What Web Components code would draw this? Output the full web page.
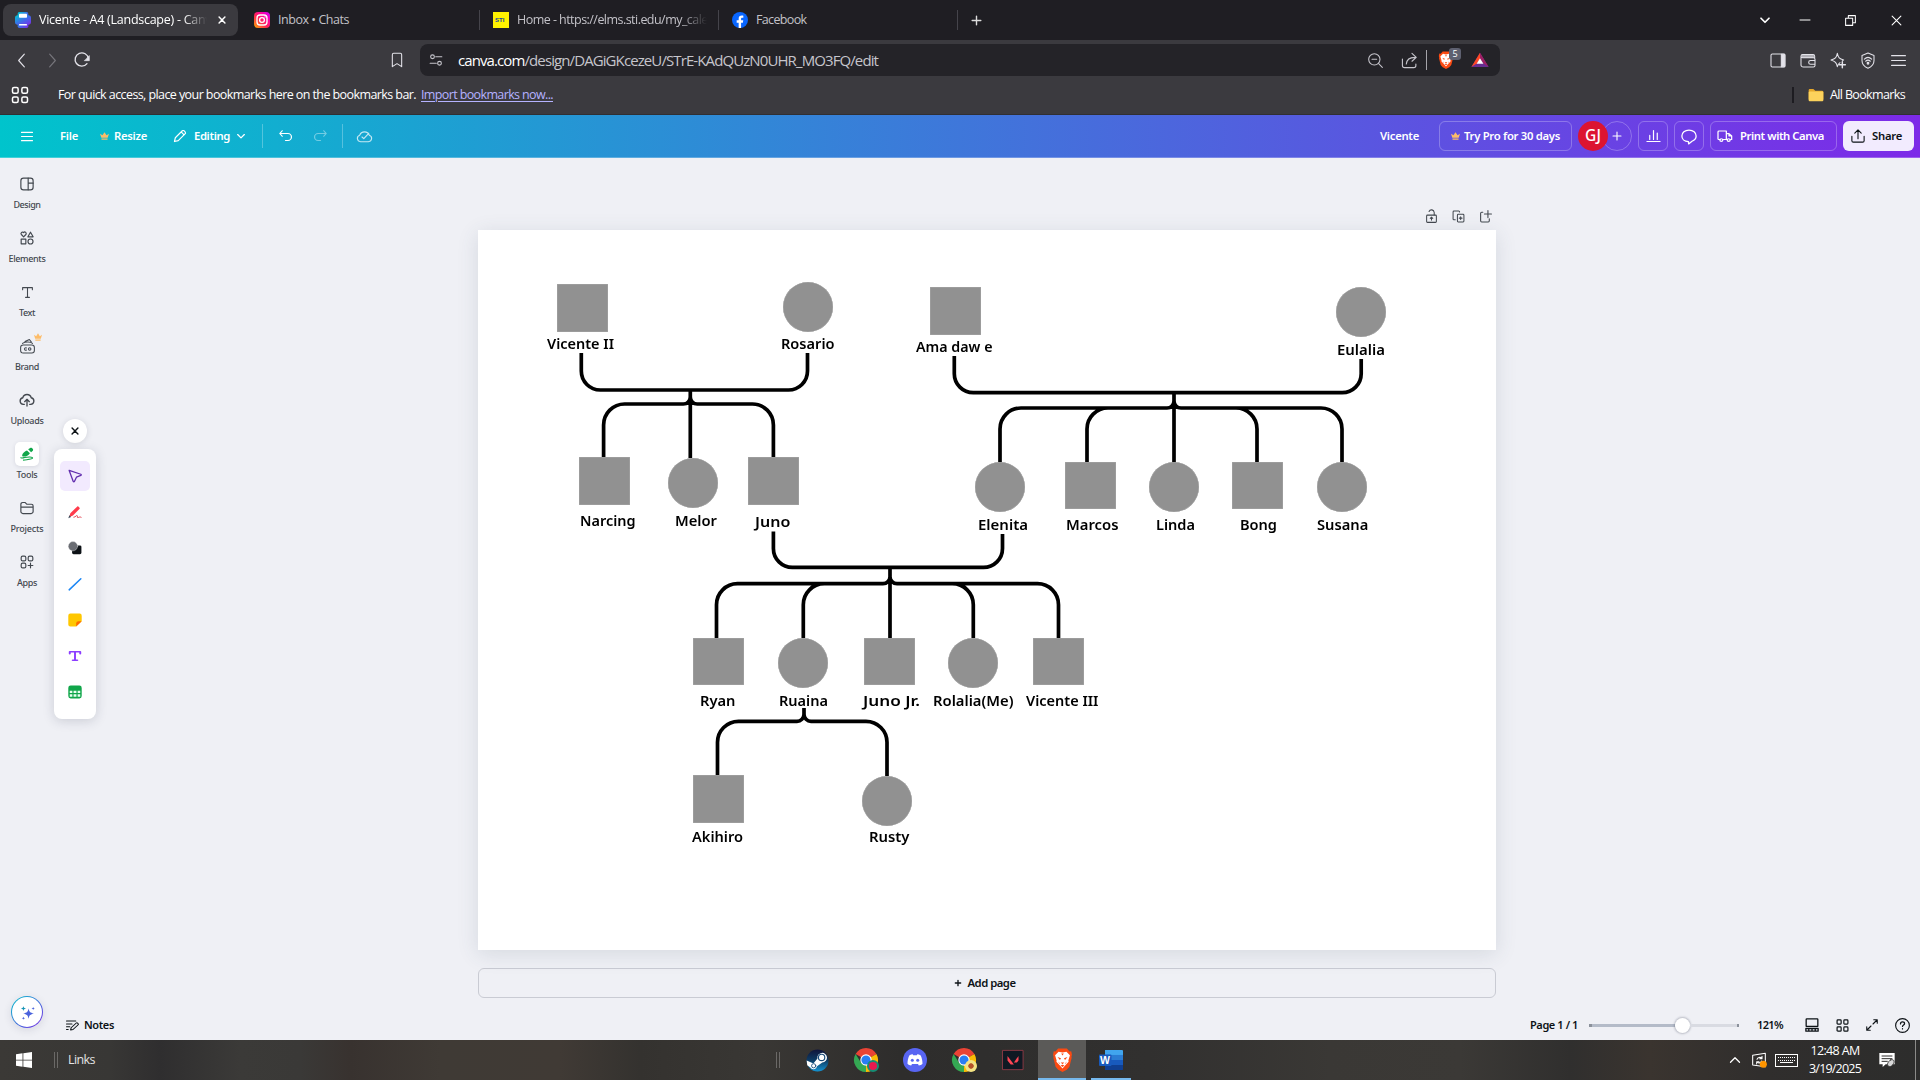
<!DOCTYPE html>
<html lang="en">
<head>
<meta charset="utf-8">
<title>Vicente - A4 (Landscape) - Canva</title>
<style>
html,body{margin:0;padding:0;width:1920px;height:1080px;overflow:hidden;background:#eff0f5}
body{font-family:"Noto Sans",sans-serif}
</style>
</head>
<body>
<desktop-screen></desktop-screen>
<script>
const ICONS = {
  canvaDoc:'<defs><linearGradient id="a" x1="0" y1="0" x2="1" y2="1"><stop offset="0" stop-color="#00c8d0"/><stop offset=".5" stop-color="#3b6fe8"/><stop offset="1" stop-color="#7d2ae8"/></linearGradient></defs><rect x="4" y="0" width="16" height="24" rx="2.5" fill="url(#a)"/><rect x="0" y="5" width="24" height="14" rx="4" fill="url(#a)"/><rect x="6" y="2.5" width="12" height="6" rx="1" fill="#fff"/><rect x="6" y="18" width="12" height="2.4" rx="1" fill="#fff"/>',
  insta:'<defs><linearGradient id="b" x1="0" y1="1" x2="1" y2="0"><stop offset="0" stop-color="#ffb000"/><stop offset=".4" stop-color="#ff2a4d"/><stop offset=".7" stop-color="#ff00a0"/><stop offset="1" stop-color="#c800ff"/></linearGradient></defs><rect width="24" height="24" rx="6" fill="url(#b)"/><rect x="4.5" y="4.5" width="15" height="15" rx="4.5" stroke="#fff" stroke-width="2"/><circle cx="12" cy="12" r="3.6" stroke="#fff" stroke-width="2"/><circle cx="16.6" cy="7.4" r="1" fill="#fff"/>',
  sti:'<rect width="24" height="24" fill="#fff200"/>',
  fb:'<circle cx="12" cy="12" r="12" fill="#0866ff"/><path d="M10 24v-8H7v-3.600h3v-2.200c0-3.400 1.600-5 4.900-5 .7 0 1.600.1 2.100.3v3.200h-1.400c-1.600 0-2 .7-2 1.900v1.800h3.300l-.6 3.600h-2.700v8z" fill="#fff"/>',
  close:'<path d="M5 5l14 14M19 5L5 19"/>',
  plus:'<path d="M12 4v16M4 12h16"/>',
  chev:'<path d="M4 8.5l8 8 8-8"/>',
  chevUp:'<path d="M3 16.5l9-9 9 9"/>',
  min:'<path d="M2 12h20"/>',
  restore:'<path d="M3 8h13v13H3zM8 8V3h13v13h-5"/>',
  back:'<path d="M16 3l-8 9 8 9"/>',
  fwd:'<path d="M8 3l8 9-8 9"/>',
  reload:'<path d="M19.5 17.5A10 10 0 1 1 21.6 10"/><path d="M23 6v7h-7z" fill="currentColor" stroke-width="1"/>',
  bookmark:'<path d="M5 4a2 2 0 0 1 2-2h10a2 2 0 0 1 2 2v18l-7-4.5L5 22z"/>',
  tune:'<circle cx="6" cy="6.5" r="3.2"/><path d="M11.5 6.5H22M2 17.5h10.500"/><circle cx="18" cy="17.500" r="3.2"/>',
  zoomout:'<circle cx="11" cy="11" r="8.500"/><path d="M17.500 17.500L23 23M7.500 11h7"/>',
  shareOut:'<path d="M2 10v9a3 3 0 0 0 3 3h13a3 3 0 0 0 3-3v-2M7.500 17c.5-6 4-9.500 12-9.500M15.500 2l6 5.500-6 5.500"/>',
  brave:'<path d="M7 .5h10l3 3 2-.3.8 3.500-.6 2 .3 1-2.600 9-3 3L12 24l-4.900-2.300-3-3L1.500 9.700l.3-1-.6-2L2 3.200l2 .3z" fill="#fb4a12" stroke="none"/><path d="M7.500 3.800l4.500.8 4.500-.8 4 3.400-1.800 5.300.3 1.300-3.500 3.200L12 20.500 8.500 17 5 13.800l.3-1.300L3.500 7.200z" fill="#fff" stroke="none"/><path d="M6.300 9l4 1.300-1.200 1.700zM17.700 9l-4 1.300 1.200 1.700zM10 14.500h4l-2 1.800zM7.300 13.500l1.700 2-.8.300zM16.700 13.500l-1.700 2 .8.300zM9.800 17.500l2.200-.8 2.200.8-2.200 1.500zM10.500 5.500h3l-1.500 2z" fill="#fb4a12" stroke="none"/>',
  bat:'<path d="M12 1L.5 22.500h23z" fill="#662d91" stroke="none"/><path d="M12 1L.5 22.500 8 17l4-7z" fill="#ff4724" stroke="none"/><path d="M12 1l11.500 21.500L16.500 17 12 10z" fill="#9e1f63" stroke="none"/><path d="M12 9.500L7.500 17.500h9z" fill="#fff" stroke="none"/>',
  sidebar:'<rect x="1.500" y="1.500" width="21" height="21" rx="2"/><path d="M17 2h5v20h-5z" fill="currentColor"/>',
  wallet:'<path d="M22 8V5a2.500 2.500 0 0 0-2.500-2.500H4a2.500 2.500 0 0 0 0 5h16a2.500 2.500 0 0 1 2.500 2.500v10a2.500 2.500 0 0 1-2.500 2.500H5A3.500 3.500 0 0 1 1.500 19V5M22 12h-6a3 3 0 0 0 0 6h6"/><path d="M3 3h17v4H3z" fill="currentColor" opacity=".7"/>',
  leo:'<path d="M15 16c-2 1.300-3.200 3-4 6-1.300-6-3-8-9.500-10C8 10.500 9.700 8.500 11 2c1.300 6.500 3 8.500 9.500 10l-2 .7"/><path d="M18.500 14.500v9M14 19h9" stroke-width="2.200"/>',
  vpn:'<path d="M12 1.500L21 5v7c0 5.500-4 9-9 11-5-2-9-5.500-9-11V5z"/><path d="M6.500 10c3.500-3 7.500-3 11 0M8.500 13c2.200-1.800 4.800-1.800 7 0"/><circle cx="12" cy="16" r="1.300" fill="currentColor"/>',
  menu:'<path d="M1 3h22M1 12h22M1 21h22"/>',
  grid4:'<rect x="2" y="2" width="7.500" height="7.500" rx="2"/><rect x="14.500" y="2" width="7.500" height="7.500" rx="2"/><rect x="2" y="14.500" width="7.500" height="7.500" rx="2"/><rect x="14.500" y="14.500" width="7.500" height="7.500" rx="2"/>',
  folderY:'<path d="M1 3.500C1 2.500 2 1.500 3 1.500h5l3 3h10a2 2 0 0 1 2 2v13H1z" fill="#e6a82b" stroke="none"/><rect x="1" y="6" width="22" height="16.500" rx="1.500" fill="#fcd25c" stroke="none"/>',
  crown:'<path d="M0 5l6.500 5L12 1l5.500 9L24 5l-3.500 12.500h-17zM4 19.500h16V23H4z" fill="#fdbc68" stroke="none"/>',
  pencil:'<path d="M2.500 21.500l1.500-6.500L16 3c2-2 7 3 5 5L9 20zM14 5l5 5"/>',
  undo:'<path d="M6 1.500L1.500 7 6 12.500M2 7h14.500a6.500 7 0 0 1 0 14H12"/>',
  redo:'<path d="M18 1.500L22.500 7 18 12.500M22 7H7.500a6.500 7 0 0 0 0 14H12"/>',
  cloudOk:'<path d="M6.500 20.500a5 5 0 0 1-1.200-9.700 7 7 0 0 1 13.400 0 5 5 0 0 1-1.200 9.700zM8.500 13.500l2.500 2.500 7-8"/>',
  chart:'<path d="M1.500 21.500h21M6 11v7M12 2.500V18M18 7v11"/>',
  bubble:'<path d="M11.500 22.500l-.2-3.300C5.500 19 2.500 15.300 2.500 11.300 2.500 6.500 6.500 3 12 3s9.500 3.500 9.500 8.300c0 3.700-2.500 6.200-5.500 7.400z"/>',
  truck:'<path d="M5 18H3a1.500 1.500 0 0 1-1.500-1.500V5A1.500 1.500 0 0 1 3 3.500h11V18H9M14 8h4l4 4v6h-2M14 18h1.500M18 8v4h4"/><circle cx="6.500" cy="19" r="2.200"/><circle cx="17.500" cy="19" r="2.200"/>',
  upload:'<path d="M12 16.500V2M6.500 7L12 1.500 17.500 7M1.500 12.500V20A2.500 2.500 0 0 0 4 22.500h16a2.500 2.500 0 0 0 2.500-2.500v-7.500"/>',
  lock:'<rect x="3" y="10.500" width="18" height="12.500" rx="1.500"/><path d="M17 10V6a5 5 0 0 0-9.500-1.700M12 14.500v4.500M9.700 16l2.300-2 2.300 2"/>',
  dup:'<path d="M6 18H3.500A1.500 1.500 0 0 1 2 16.500v-13A1.500 1.500 0 0 1 3.500 2h9A1.500 1.500 0 0 1 14 3.500M22 20.500a1.500 1.500 0 0 1-1.500 1.500h-9A1.500 1.500 0 0 1 10 20.500v-11A1.500 1.500 0 0 1 11.500 8h9A1.500 1.500 0 0 1 22 9.500zM16 12.500v5M13.500 15h5"/>',
  addPage:'<path d="M7 4H5a2 2 0 0 0-2 2v14a2 2 0 0 0 2 2h12a2 2 0 0 0 2-2v-4M16.500 1v13M10 7.500h13"/>',
  design:'<rect x="1.500" y="2" width="21" height="20" rx="4.500"/><path d="M14 2v20M14 10.500h8.500"/>',
  elements:'<path d="M6.200 10L2.400 6a2.500 2.500 0 0 1 3.800-3.300A2.500 2.500 0 0 1 10 6zM18 2l4.500 8h-9zM2 14h8v8H2z"/><circle cx="18" cy="18" r="4.300"/>',
  text:'<path d="M3 7V3h18v4M12 3v18M8.500 21h7"/>',
  brand:'<rect x="1" y="9.500" width="22" height="13" rx="4"/><path d="M4 7C9 4 17 4.500 20 7M8 4l7-3.200 3 3.700M10.300 14.300a2 2 0 1 0 0 3.400"/><circle cx="15.500" cy="16" r="2"/>',
  uploads:'<path d="M8 18.500H6.500a5 5 0 0 1-.8-9.900 6.500 6.500 0 0 1 12.600 0 5 5 0 0 1-.8 9.900H16M12 21v-9M8.500 14.500L12 11l3.500 3.500"/>',
  tools:'<path d="M4 16c-1-3 2-8 8-10l5 4.500C14 15.500 9 17 4 16zM14 4l3.500-2.500C20 0 24 4 22 6.500L19 9z" fill="#10a64a" stroke="none"/><path d="M8 18c6-1 13.500-1.500 13.500 1S12 21.500 6 22.500M1.500 18.500c2 .8 4 .3 5.500-.3" stroke="#10a64a"/>',
  projects:'<path d="M1.500 7V5.500A3 3 0 0 1 4.500 2.500h4l3 3h8a3 3 0 0 1 3 3V18a3.500 3.500 0 0 1-3.500 3.500H5A3.500 3.500 0 0 1 1.500 18zM1.500 10.500h21"/>',
  apps:'<rect x="2" y="2" width="8" height="8" rx="2.500"/><rect x="14" y="2" width="8" height="8" rx="2.500"/><rect x="2" y="14" width="8" height="8" rx="2.500"/><path d="M18 14v8M14 18h8"/>',
  cursor:'<path d="M2 2.500l20 6.500c1 .5 1 1.500 0 2l-7.500 3L11 21.500c-.5 1-1.500 1-2 0z"/>',
  pen:'<path d="M2 21l2-7L16 2.500c1-1 5 2.500 4 4L8.500 18z" fill="#ff3b4b" stroke="none"/><path d="M.5 22.500l1.800-5 3 3z" fill="#3a4a5a" stroke="none"/><path d="M10 21c3 0 5-4.500 6-2.500s-1 3 1 3 3-2 5.500-.5" stroke="#e0303f" stroke-width="1.500"/>',
  shapes:'<rect x="7" y="7.500" width="16" height="15" rx="2.500" fill="#0d1216" stroke="none"/><circle cx="8.500" cy="9" r="8" fill="#6a6d73" stroke="#fff" stroke-width=".5"/>',
  line:'<path d="M2 22L22 3" stroke="#1b86f5" stroke-width="2.600"/>',
  note:'<path d="M4 1h16a3.500 3.500 0 0 1 3.500 3.500V14L14 23H4A3.500 3.500 0 0 1 .5 19.500v-15A3.500 3.500 0 0 1 4 1z" fill="#ffc700" stroke="none"/><path d="M23.500 14L14 23v-5a4 4 0 0 1 4-4z" fill="#ff6a00" stroke="none"/>',
  bigT:'<path d="M3 7.500V3.500h18v4M12 3.500v17M8 20.500h8" stroke="#8b3dff" stroke-width="3.300"/>',
  table:'<rect x=".5" y="1" width="23" height="22" rx="4" fill="#10a64a" stroke="none"/><path d="M3 10h4.500v3.500H3zM9.500 10h5v3.500h-5zM16.500 10H21v3.500h-4.500zM3 16h4.500v4H3zM9.500 16h5v4h-5zM16.500 16H21v4h-4.500z" fill="#e8fff0" stroke="none"/>',
  sparkles:'<g stroke="none" fill="#4a63dd"><path d="M14 4.500c1.300 6 2.500 7.500 10 9.500-7.500 2-8.700 3.500-10 9.500-1.300-6-2.500-7.500-10-9.500 7.500-2 8.700-3.500 10-9.500z"/><path d="M4.500 0c.6 3.200 1.200 3.800 4.800 4.800C5.700 5.800 5.100 6.400 4.500 9.600 3.900 6.400 3.300 5.800-.3 4.800 3.300 3.800 3.900 3.200 4.500 0z" fill="#1593b5"/><path d="M22.500 1.200c.4 2.300.9 2.800 3.200 3.300-2.300.5-2.800 1-3.200 3.300-.4-2.300-.9-2.800-3.200-3.300 2.300-.5 2.800-1 3.200-3.300zM4.500 19.200c.4 2.300.9 2.800 3.200 3.300-2.300.5-2.800 1-3.200 3.300-.4-2.300-.9-2.800-3.200-3.300 2.300-.5 2.800-1 3.200-3.300z"/></g>',
  notes:'<path d="M1 4h17M1 10h10M1 15.500h6M1 21h3M8.500 22l1-4.500L19 8c1.500-1.500 5 2 3.500 3.500L13 21z"/>',
  pageView:'<rect x="2" y="1.500" width="20" height="13" rx="1"/><path d="M1.500 18h21v4.500h-21zM6.500 18v4.500M12 18v4.500M17.500 18v4.500"/>',
  gridView:'<rect x="2" y="1.500" width="7.500" height="8" rx="1.500"/><rect x="14.500" y="1.500" width="7.500" height="8" rx="1.500"/><rect x="2" y="14.500" width="7.500" height="8" rx="1.500"/><rect x="14.500" y="14.500" width="7.500" height="8" rx="1.500"/>',
  expand:'<path d="M14 10l8-8M15.500 1.500h7v7M10 14l-8 8M1.500 15.500v7h7"/>',
  help:'<circle cx="12" cy="12" r="11"/><path d="M8.800 9.500c0-4.500 6.500-4 6.500-.5 0 2-3.300 2.300-3.300 4.500M12 17v.5" stroke-width="2"/>',
  win:'<path d="M0 3.400L9.800 2v9.500H0zM11 1.800L24 0v11.500H11zM0 12.600h9.800V22L0 20.600zM11 12.600h13V24l-13-1.800z" fill="#fff" stroke="none"/>',
  steam:'<defs><linearGradient id="st" x1="0" y1="0" x2="0" y2="1"><stop offset="0" stop-color="#10143a"/><stop offset=".5" stop-color="#0d3d66"/><stop offset="1" stop-color="#1493d1"/></linearGradient></defs><circle cx="12" cy="12" r="11.500" fill="url(#st)" stroke="none"/><path d="M.7 12l7 3 4.300-5a5 5 0 1 1 5 4l-5.500 4a3.800 3.800 0 0 1-7 1.300L1.300 17z" fill="#fff" stroke="none"/><circle cx="16.300" cy="8.800" r="3.300" fill="#fff" stroke="#174a78" stroke-width="1.200"/><circle cx="8" cy="17.500" r="2.200" stroke="#174a78" stroke-width=".9"/>',
  chrome:'<path d="M12 12L1.600 6A12 12 0 0 1 22.400 6z" fill="#ea4335" stroke="none"/><path d="M12 12H12L22.400 6A12 12 0 0 1 12 24z" fill="#fbbc05" stroke="none"/><path d="M12 24A12 12 0 0 1 1.600 6l5.600 9 4.800 3z" fill="#34a853" stroke="none"/><path d="M12 12L16.800 15 12 24z" fill="#fbbc05" stroke="none"/><path d="M12 6.300h10.600L22.400 6H12z" fill="#ea4335" stroke="none"/><circle cx="12" cy="12" r="5.700" fill="#fff" stroke="none"/><circle cx="12" cy="12" r="4.600" fill="#2a7df4" stroke="none"/>',
  discord:'<circle cx="12" cy="12" r="12" fill="#5865f2" stroke="none"/><path d="M4.500 15.700c0-3 .7-6.200 2-8.400 1.200-.7 2-1 3.200-1.100l.5 1h3.600l.5-1c1.200.1 2 .4 3.200 1.100 1.300 2.200 2 5.400 2 8.400-1 1-2.200 1.500-3.700 1.800l-.8-1.500h-6l-.8 1.500c-1.500-.3-2.700-.8-3.700-1.800z" fill="#fff" stroke="none"/><circle cx="9.300" cy="12.300" r="1.500" fill="#5865f2" stroke="none"/><circle cx="14.700" cy="12.300" r="1.500" fill="#5865f2" stroke="none"/>',
  valorant:'<rect x="1" y="1.500" width="22" height="21" fill="#0f1923" stroke="#8f3a45" stroke-width="1"/><path d="M6 7.500l7 9.500H9.500L6 12.500zM18 7.500V12.500L16.300 14.700h-3.300z" fill="#ff4655" stroke="none"/>',
  word:'<path d="M6 1h17a1 1 0 0 1 1 1v5H6z" fill="#41a5ee" stroke="none"/><path d="M6 6.500h18V12H6z" fill="#2b7cd3" stroke="none"/><path d="M6 12h18v5.500H6z" fill="#185abd" stroke="none"/><path d="M6 17.500h18V22a1 1 0 0 1-1 1H6z" fill="#103f91" stroke="none"/><rect x="0" y="6" width="12.500" height="12.500" rx="1" fill="#185abd" stroke="none"/>',
  wupdate:'<path d="M2.500 5l19-3v20l-19-2.500z"/><path d="M9 11c1-3 5-4 7-1.500M16.500 6.500v3.500H13M16 13.500c-1 3-5 4-7 1.500M8.500 18v-3.500H12"/><circle cx="18.500" cy="18.500" r="5.300" fill="#ff9500" stroke="none"/>',
  action:'<path d="M.5 1.500h23v17H10l-4.500 4v-4h-5z" fill="#fff" stroke="none"/><path d="M4.500 6h15M4.500 10h15M4.500 14h8" stroke="#302f2e" stroke-width="1.500"/><path d="M17 12c4-2 7 1 5 5s-5 6-8 4 0-7 3-9z" fill="#d8d8d8" stroke="#302f2e" stroke-width="1.300"/>'
};
const def=(n,c)=>customElements.define(n,c);
/* Base class: renders a template string into an open shadow root. */
class Base extends HTMLElement{
  connectedCallback(){
    if(this.shadowRoot) return;
    const r=this.attachShadow({mode:'open'});
    r.innerHTML='<style>*{box-sizing:border-box}'+this.css()+'</style>'+this.html();
    this.ready&&this.ready(r);
  }
  a(n,d=''){return this.getAttribute(n)??d}
  css(){return ''} html(){return ''}
}
def('ui-icon',class extends Base{
  css(){const s=this.a('size','16');return `:host{display:block;flex:none;width:${s}px;height:${this.a('h',s)}px}svg{display:block;width:100%;height:100%;overflow:visible}`}
  html(){return `<svg viewBox="0 0 24 24" preserveAspectRatio="none" fill="none" stroke="${/^(insta|fb|sti|canvaDoc)$/.test(this.a('name'))?'none':'currentColor'}" stroke-width="${this.a('sw','1.6')}" stroke-linecap="round" stroke-linejoin="round">${ICONS[this.a('name')]}</svg>`}
});
/* Single-line text sized to span the given width: by tracking, or by scaling when "scale" is set. */
def('fit-text',class extends Base{
  css(){return `:host{display:block;flex:none;white-space:nowrap;width:${this.a('w')}px}span{display:inline-block;white-space:pre;transform-origin:0 50%}:host([underline]) span{text-decoration:underline;text-underline-offset:2px}`}
  html(){return '<span><slot></slot></span>'}
  ready(r){const s=r.querySelector('span'),n=this.textContent.length,w=+this.a('w'),c=s.getBoundingClientRect().width;
    if(this.hasAttribute('scale')) s.style.transform=`scaleX(${(w/c).toFixed(4)})`;
    else s.style.letterSpacing=((w-c)/n).toFixed(3)+'px'}
});
def('browser-tab',class extends Base{
  css(){const on=this.hasAttribute('active');return `:host{display:flex;align-items:center;width:239px;height:32px;flex:none;font:12.5px "Open Sans",sans-serif;color:${on?'#fff':'#c3c2c8'}}
  .t{display:flex;align-items:center;width:235px;height:32px;padding-left:12px;border-radius:8px;background:${on?'#3b3a3f':'none'}}
  .c{width:${on?168:190}px;margin-left:8px;overflow:hidden;line-height:20px;-webkit-mask:linear-gradient(90deg,#000 86%,transparent)}
  .full{-webkit-mask:none}
  .s{width:1px;height:20px;margin-left:2px;background:${on?'transparent':'#45444b'}}
  .x{margin-left:${on?10:0}px}.i{position:relative}.b{position:absolute;left:2px;top:5px;font:bold 6px/7px "Liberation Sans";color:#15479b}`}
  html(){return `<div class="t"><div class="i"><ui-icon name="${this.a('icon')}" size="16"></ui-icon>${this.a('icon')=='sti'?'<span class="b">STI</span>':''}</div><div class="c ${this.hasAttribute('short')?'full':''}"><slot></slot></div>${this.hasAttribute('active')?'<ui-icon class="x" name="close" size="10" sw="3.6"></ui-icon>':''}</div><div class="s"></div>`}
});
def('tab-strip',class extends Base{
  css(){return `:host{display:flex;align-items:center;height:40px;background:#1f1e23;color:#fff;padding-left:3px}.g{flex:1}ui-icon{color:#fff}`}
  html(){return `<browser-tab icon="canvaDoc" active><fit-text w="179">Vicente - A4 (Landscape) - Canva</fit-text></browser-tab>
  <browser-tab icon="insta" short><fit-text w="71">Inbox • Chats</fit-text></browser-tab>
  <browser-tab icon="sti"><fit-text w="216">Home - https://elms.sti.edu/my_calendar</fit-text></browser-tab>
  <browser-tab icon="fb" short><fit-text w="50.5">Facebook</fit-text></browser-tab>
  <ui-icon name="plus" size="13" sw="2.6" style="margin-left:11px;color:#ddd"></ui-icon><div class="g"></div>
  <ui-icon name="chev" size="12" h="12" sw="3.4"></ui-icon>
  <ui-icon name="min" size="12" sw="2" style="margin-left:28px"></ui-icon>
  <ui-icon name="restore" size="13" sw="1.9" style="margin-left:33px"></ui-icon>
  <ui-icon name="close" size="15" sw="1.7" style="margin:0 16px 0 32px"></ui-icon>`}
});
def('nav-bar',class extends Base{
  css(){return `:host{display:flex;align-items:center;height:40px;background:#3b3a3f;color:#e4e3ea;padding-left:13px;font:15px "Open Sans",sans-serif}
  .u{display:flex;align-items:center;height:32px;width:1080px;margin-left:15px;border-radius:8px;background:#242328;color:#c6c5cc;padding-left:9px}
  fit-text{line-height:30px;margin-top:-1px}b{font-weight:400;color:#fff}.g{flex:1}.v{width:1px;height:20px;background:#a5a4aa;margin-left:8px}
  .br{position:relative;margin-left:11px}.bd{position:absolute;left:11px;top:-3px;width:12px;height:12px;border-radius:3px;background:#5e6070;color:#fff;font:9px/12px "Open Sans";text-align:center}`}
  html(){return `<ui-icon name="back" size="17"></ui-icon><ui-icon name="fwd" size="17" style="margin-left:14px;color:#77767c"></ui-icon><ui-icon name="reload" size="16" sw="2" style="margin-left:13px"></ui-icon>
  <ui-icon name="bookmark" size="16" style="margin-left:299px"></ui-icon>
  <div class="u"><ui-icon name="tune" size="14" sw="1.900"></ui-icon><fit-text w="420" style="margin-left:15px"><b>canva.com</b>/design/DAGiGKcezeU/STrE-KAdQUzN0UHR_MO3FQ/edit</fit-text>
   <ui-icon name="zoomout" size="16" style="margin-left:489px"></ui-icon><ui-icon name="shareOut" size="17" style="margin-left:18px"></ui-icon><div class="v"></div>
   <div class="br"><ui-icon name="brave" size="16" h="18"></ui-icon><div class="bd">5</div></div><ui-icon name="bat" size="18" h="16" style="margin-left:17px"></ui-icon></div>
  <div class="g"></div>
  <ui-icon name="sidebar" size="16" h="15"></ui-icon><ui-icon name="wallet" size="16" h="15" style="margin-left:14px"></ui-icon><ui-icon name="leo" size="16" style="margin-left:14px"></ui-icon><ui-icon name="vpn" size="16" h="17" style="margin-left:14px"></ui-icon><ui-icon name="menu" size="15" h="13" sw="2" style="margin:0 14px 0 15px"></ui-icon>`}
});
def('bookmark-bar',class extends Base{
  css(){return `:host{display:flex;align-items:center;height:35px;background:#3b3a3f;border-bottom:1px solid #302f33;color:#fff;padding:0 15px 5px 11px;font:12.500px "Open Sans",sans-serif}
  a{color:#b5b2ff}.g{flex:1}.v{width:2px;height:16px;background:#1d1c21}`}
  html(){return `<ui-icon name="grid4" size="18" sw="2"></ui-icon><fit-text w="358" style="margin-left:29px">For quick access, place your bookmarks here on the bookmarks bar.</fit-text>
  <a style="margin-left:5px"><fit-text w="132" underline>Import bookmarks now...</fit-text></a><div class="g"></div><div class="v"></div><ui-icon name="folderY" size="16" h="14" style="margin-left:14px"></ui-icon><fit-text w="75" style="margin-left:6px">All Bookmarks</fit-text>`}
});
def('outline-button',class extends Base{
  css(){return `:host{display:flex;align-items:center;flex:none;height:30px;border:1px solid rgba(255,255,255,.26);border-radius:6px}:host([center]){justify-content:center}`}
  html(){return '<slot></slot>'}
});
def('editor-header',class extends Base{
  css(){return `:host{display:flex;align-items:center;height:43px;padding-left:21px;border-bottom:1px solid rgba(255,255,255,.25);background:linear-gradient(90deg,#00c4cc,#7d2ae8) border-box;color:#fff;font:650 11.300px/20px "Noto Sans",sans-serif}
  .v{width:1px;height:24px;background:rgba(255,255,255,.28)}.g{flex:1}
  .gj{width:30px;height:30px;border-radius:50%;background:#dc1431;text-align:center;font:500 15.500px/29px "Noto Sans";z-index:1;margin-left:6px}
  .sh{display:flex;align-items:center;width:71px;height:30px;border-radius:6px;background:#f2ebfe;color:#0d1216;padding-left:8px;margin:0 6px 0 6px}`}
  html(){return `<ui-icon name="menu" size="12" h="11" sw="2.200"></ui-icon><fit-text w="18" style="margin-left:27px">File</fit-text>
  <ui-icon name="crown" size="9" h="8" style="margin-left:22px"></ui-icon><fit-text w="33" style="margin-left:5px">Resize</fit-text>
  <ui-icon name="pencil" size="14" sw="2" style="margin-left:26px"></ui-icon><fit-text w="36" style="margin-left:7px">Editing</fit-text><ui-icon name="chev" size="10" sw="3" style="margin-left:6px"></ui-icon>
  <div class="v" style="margin-left:16px"></div><ui-icon name="undo" size="13" h="12" sw="2.300" style="margin-left:16px"></ui-icon><ui-icon name="redo" size="13" h="12" sw="2.300" style="margin-left:22px;opacity:.4"></ui-icon>
  <div class="v" style="margin-left:15px"></div><ui-icon name="cloudOk" size="17" h="16" style="margin-left:13px;opacity:.75"></ui-icon><div class="g"></div>
  <fit-text w="39">Vicente</fit-text>
  <outline-button style="width:133px;margin-left:20px;padding-left:11px"><ui-icon name="crown" size="9" h="8"></ui-icon><fit-text w="96" style="margin-left:4px">Try Pro for 30 days</fit-text></outline-button>
  <div class="gj">GJ</div><outline-button center style="width:30px;border-radius:50%;margin-left:-6px"><ui-icon name="plus" size="12" sw="2.200"></ui-icon></outline-button>
  <outline-button center style="width:30px;margin-left:6px"><ui-icon name="chart" size="15" h="14" sw="1.900"></ui-icon></outline-button>
  <outline-button center style="width:30px;margin-left:6px"><ui-icon name="bubble" size="18" h="17" sw="1.700"></ui-icon></outline-button>
  <outline-button style="width:127px;margin-left:6px;padding-left:6px"><ui-icon name="truck" size="16" h="14" sw="1.900"></ui-icon><fit-text w="84" style="margin-left:7px">Print with Canva</fit-text></outline-button>
  <div class="sh"><ui-icon name="upload" size="14" sw="1.900"></ui-icon><fit-text w="30" style="margin-left:7px">Share</fit-text></div>`}
});
def('side-item',class extends Base{
  css(){return `:host{display:flex;flex-direction:column;align-items:center;width:54px;height:54px;flex:none;color:#43484f;font:500 9px/12px "Noto Sans",sans-serif}
  .i{position:relative;display:flex;align-items:center;justify-content:center;width:24px;height:24px;border-radius:5px}
  :host([on]) .i{background:#fff;box-shadow:0 1px 4px rgba(40,45,70,.12)}
  .cr{position:absolute;right:-3px;top:-1px}fit-text{margin-top:3px}`}
  html(){return `<div class="i"><ui-icon name="${this.a('icon')}" size="${this.a('size','14')}" sw="${this.a('sw','2')}"></ui-icon>${this.hasAttribute('pro')?'<ui-icon class="cr" name="crown" size="8"></ui-icon>':''}</div><fit-text w="${this.a('w')}"><slot></slot></fit-text>`}
  ready(r){const s=r.querySelector('fit-text').shadowRoot.querySelector('span');s.style.letterSpacing='0';s.style.letterSpacing=((+this.a('w')-s.getBoundingClientRect().width)/this.textContent.length)+'px'}
});
def('side-rail',class extends Base{
  css(){return `:host{display:flex;flex-direction:column;width:54px;height:882px;padding-top:14px}
  .ai{width:32px;height:32px;border-radius:50%;margin:auto 0 12px 11px;border:1.500px solid transparent;background:linear-gradient(#fff,#fff) padding-box,linear-gradient(135deg,#00c4cc,#7d2ae8) border-box;display:flex;align-items:center;justify-content:center;box-shadow:0 2px 8px rgba(40,45,70,.12)}`}
  html(){return `<side-item icon="design" w="27">Design</side-item><side-item icon="elements" w="37">Elements</side-item><side-item icon="text" size="13" w="16">Text</side-item><side-item icon="brand" size="15" sw="1.700" w="24" pro>Brand</side-item><side-item icon="uploads" size="16" w="33">Uploads</side-item><side-item icon="tools" w="21" on>Tools</side-item><side-item icon="projects" w="33">Projects</side-item><side-item icon="apps" w="20">Apps</side-item>
  <div class="ai"><ui-icon name="sparkles" size="13"></ui-icon></div>`}
});
def('tool-palette',class extends Base{
  css(){return `:host{display:flex;flex-direction:column;align-items:center;width:42px;padding-top:261px}
  .x{width:24px;height:24px;border-radius:50%;background:#fff;display:flex;align-items:center;justify-content:center;color:#0d1216;box-shadow:0 1px 6px rgba(40,45,70,.15)}
  .p{margin-top:6px;width:42px;height:270px;border-radius:8px;background:#fff;padding-top:12px;display:flex;flex-direction:column;align-items:center;gap:6px;box-shadow:0 2px 12px rgba(40,45,70,.18)}
  .b{width:30px;height:30px;border-radius:5px;display:flex;align-items:center;justify-content:center;color:#612dae}
  .b:first-child{background:#f2eafe}`}
  html(){return `<div class="x"><ui-icon name="close" size="10" sw="3.500"></ui-icon></div><div class="p">${['cursor','pen','shapes','line','note','bigT','table'].map(n=>`<div class="b"><ui-icon name="${n}" size="14" h="${n=='bigT'?12:14}" sw="2.200"></ui-icon></div>`).join('')}</div>`}
});
/* One relative on the chart: a square or a circle, with the name under it. */
def('person-node',class extends Base{
  css(){const c=this.hasAttribute('circle'),x=+this.a('cx'),y=+this.a('top'),h=c?50:47.300,w=c?50:51;
   return `:host{position:absolute;left:${x-w/2}px;top:${y}px;width:${w}px;height:${h}px}
   .s{width:100%;height:100%;background:#919191;border-radius:${c?'50%':'0'};box-shadow:0 0 0 .5px #a8a8a8 inset}
   .l{position:absolute;left:${+this.a('lx')-x+w/2}px;top:${+this.a('base')-y-15.300}px;font:600 14.200px/20px "Noto Sans",sans-serif;color:#000}`}
  html(){return `<div class="s"></div><fit-text class="l" scale w="${this.a('lw')}">${this.a('name')}</fit-text>`}
});
def('family-chart',class extends Base{
  css(){return `:host{display:block;position:relative;width:1018px;height:720px;background:#fff;box-shadow:0 4px 20px rgba(57,76,96,.14)}svg{position:absolute;left:0;top:0}`}
  html(){
    const P=[['Vicente II',0,582.300,284.300,547,67,349],['Rosario',1,807.600,281.500,780.700,53.500,349],['Ama daw e',0,955.300,287.300,915.800,76.500,352.300],['Eulalia',1,1361,287.300,1337.300,48,355.300],
    ['Narcing',0,604.100,457.300,580.300,55.500,526],['Melor',1,692.500,458,674.800,42,526],['Juno',0,773.200,457.300,755.500,35.300,527],
    ['Elenita',1,1000,462,977.500,50,530],['Marcos',0,1090.500,462.200,1065.500,52.500,530],['Linda',1,1174,462,1156,39,530],['Bong',0,1257.800,462.200,1239.700,37,530],['Susana',1,1342,462,1316.800,51.300,530],
    ['Ryan',0,718,638,700.300,35.500,706],['Ruaina',1,803.300,638,779,49,706],['Juno Jr.',0,889,638,863.300,57,706],['Rolalia(Me)',1,973,638,932.700,80.500,706],['Vicente III',0,1058.500,638,1025.500,72.500,706],
    ['Akihiro',0,718,775.300,692,51,842],['Rusty',1,887,775.500,868.800,40.500,842]];
    const X=478,Y=230;
    const join=(l,yl,r,yr,b)=>`M${l} ${yl}V${b-19}A19 19 0 0 0 ${l+19} ${b}H${r-19}A19 19 0 0 0 ${r} ${b-19}V${yr}`;
    const kid=(jx,jy,y,x,e)=>{const s=x<jx?-1:1,f=s<0?1:0,g=s<0?0:1;return `M${jx} ${jy}V${y-7}A7 7 0 0 ${f} ${jx+7*s} ${y}H${x-21*s}A21 21 0 0 ${g} ${x} ${y+21}V${e}`};
    const d=[join(581.300,353,807.500,353,390),join(954.300,356,1361.200,359,392.700),join(773.400,531.500,1002.500,534,567.400),
      'M690.300 390V458','M1174 392V463','M890 567V638',
      ...[603.600,773.400].map(x=>kid(690.300,390,404,x,458)),
      ...[1000,1087,1257,1342].map(x=>kid(1174,392,408,x,462.500)),
      ...[716.500,803.300,973.300,1058.500].map(x=>kid(890,567,583.700,x,638)),
      ...[717.500,887].map(x=>kid(804,708,721.300,x,776))].join('');
    return `<svg width="1018" height="720" viewBox="${X} ${Y} 1018 720" fill="none" stroke="#000" stroke-width="3.700"><path d="${d}"/></svg>`+
      P.map(p=>`<person-node name="${p[0]}" ${p[1]?'circle':''} cx="${p[2]-X}" top="${p[3]-Y}" lx="${p[4]-X}" lw="${p[5]}" base="${p[6]-Y}"></person-node>`).join('')}
});
def('zoom-slider',class extends Base{
  css(){return `:host{display:flex;align-items:center;width:150px;height:16px;flex:none}.a{width:86px;height:3px;background:#b4bbc8;border-left:3px solid #8b919b}.k{width:15px;height:15px;border-radius:50%;background:#fff;box-shadow:0 0 2px 1px rgba(60,65,85,.3);flex:none}.b{flex:1;height:3px;background:#d9dbe2;border-right:2px solid #8b919b}`}
  html(){return '<div class="a"></div><div class="k"></div><div class="b"></div>'}
});
def('canvas-area',class extends Base{
  css(){return `:host{display:flex;flex-direction:column;flex:1;height:882px;margin-left:-96px;color:#43484f}
  .t{display:flex;justify-content:flex-end;align-items:center;gap:14px;height:14px;margin:51px 428px 7px 0}
  family-chart{margin-left:478px}
  .add{display:flex;align-items:center;justify-content:center;margin:18px 0 0 478px;padding-right:5px;width:1018px;height:30px;border:1px solid #c9cbd3;border-radius:6px;font:650 11.300px/20px "Noto Sans";color:#0d1216}
  .f{display:flex;align-items:center;height:30px;margin-top:12px;padding-left:66px;color:#0d1216;font:600 11px/20px "Noto Sans"}.g{flex:1}`}
  html(){return `<div class="t"><ui-icon name="lock" size="13" h="14" sw="1.900"></ui-icon><ui-icon name="dup" size="13" sw="1.900"></ui-icon><ui-icon name="addPage" size="13" sw="2"></ui-icon></div>
  <family-chart></family-chart><div class="add"><ui-icon name="plus" size="8" sw="4"></ui-icon><fit-text w="48" style="margin-left:6px">Add page</fit-text></div>
  <div class="f"><ui-icon name="notes" size="13" h="12" sw="2.100"></ui-icon><fit-text w="30" style="margin-left:5px;">Notes</fit-text><div class="g"></div><fit-text w="48">Page 1 / 1</fit-text><zoom-slider style="margin-left:11px"></zoom-slider><fit-text w="26" style="margin-left:18px">121%</fit-text>
  <ui-icon name="pageView" size="14" sw="2.200" style="margin-left:22px"></ui-icon><ui-icon name="gridView" size="13" h="13" sw="2.200" style="margin-left:17px"></ui-icon><ui-icon name="expand" size="12" sw="2.200" style="margin-left:17px"></ui-icon><ui-icon name="help" size="15" sw="1.800" style="margin:0 10px 0 17px"></ui-icon></div>`}
});
def('task-icon',class extends Base{
  css(){return `:host{position:relative;display:flex;align-items:center;justify-content:center;width:48px;height:40px;flex:none;margin-left:1px;border-bottom:2px solid transparent;padding-top:2px}
  :host([open]){border-color:#76b9ed;width:40px;margin-left:5px}:host([on]){background:#5b5a58;border-color:#76b9ed}
  .d{position:absolute;left:25px;top:20px;width:12px;height:12px;border-radius:50%}
  .r{background:#e8194f;border:2px solid #168c74}.y{background:radial-gradient(#b5532a 0 28%,#f4e383 36%)}
  .w{position:absolute;left:9px;top:13px;color:#fff;font:bold 10.500px/14px "Liberation Sans"}`}
  html(){const b=this.a('badge');return `<ui-icon name="${this.a('icon')}" size="${this.a('size','24')}" h="${this.a('h',this.a('size','24'))}"></ui-icon>${b?`<div class="d ${b}"></div>`:''}${this.a('icon')=='word'?'<span class="w">W</span>':''}`}
});
def('task-bar',class extends Base{
  css(){return `:host{display:flex;align-items:center;height:40px;color:#fff;font:12.500px/18px "Open Sans",sans-serif;background:linear-gradient(90deg,#3b3936 0,#383735 110px,#2f2e2f 160px,#3b3a38 240px,#3a3937 300px,#38322f 350px,#3f3a35 440px,#403a35 560px,#34322f 640px,#393734 760px,#2e2d2c 900px,#31302f 1150px,#3a3835 1330px,#3b3936 1460px,#302f2e 1570px,#3a342f 1650px,#302e2d 1760px,#2d2d2c 1920px)}
  .s{width:4px;height:16px;border:solid #6b6967;border-width:0 1px}.g{flex:1}
  .kb{width:23px;height:13px;border:1px solid #fff;display:flex;flex-direction:column;justify-content:space-evenly;padding:1px 2px;margin-left:8px}
  .kb i{height:1px;background:repeating-linear-gradient(90deg,#fff 0 1px,transparent 1px 2px)}.kb i:last-child{margin:0 2px;background:#fff}
  .c{display:flex;flex-direction:column;align-items:center;width:54px;margin-left:10px}.e{width:1px;height:40px;background:#8b8a88;margin:0 4px 0 20px}`}
  html(){return `<ui-icon name="win" size="16" style="margin-left:16px"></ui-icon><div class="s" style="margin-left:22px"></div><fit-text w="27" style="margin-left:10px;color:#e4e4e4">Links</fit-text>
  <div class="s" style="margin-left:681px"></div><task-icon icon="steam" size="23" style="margin-left:13px"></task-icon><task-icon icon="chrome" badge="r"></task-icon><task-icon icon="discord"></task-icon><task-icon icon="chrome" badge="y"></task-icon><task-icon icon="valorant" size="22"></task-icon><task-icon icon="brave" size="21" h="24" on></task-icon><task-icon icon="word" size="24" h="22" open></task-icon>
  <div class="g"></div><ui-icon name="chevUp" size="12" sw="2.600"></ui-icon><ui-icon name="wupdate" size="16" sw="1.600" style="margin-left:10px"></ui-icon><div class="kb"><i></i><i></i><i></i></div>
  <div class="c"><fit-text w="49">12:48 AM</fit-text><fit-text w="52">3/19/2025</fit-text></div><ui-icon name="action" size="16" style="margin-left:17px"></ui-icon><div class="e"></div>`}
});
def('desktop-screen',class extends Base{
  css(){return `:host{display:flex;flex-direction:column;width:1920px;height:1080px;overflow:hidden}.m{display:flex;height:882px;background:#eff0f5}`}
  html(){return `<tab-strip></tab-strip><nav-bar></nav-bar><bookmark-bar></bookmark-bar><editor-header></editor-header><div class="m"><side-rail></side-rail><tool-palette style="position:relative;z-index:1"></tool-palette><canvas-area></canvas-area></div><task-bar></task-bar>`}
});
</script>
</body>
</html>
